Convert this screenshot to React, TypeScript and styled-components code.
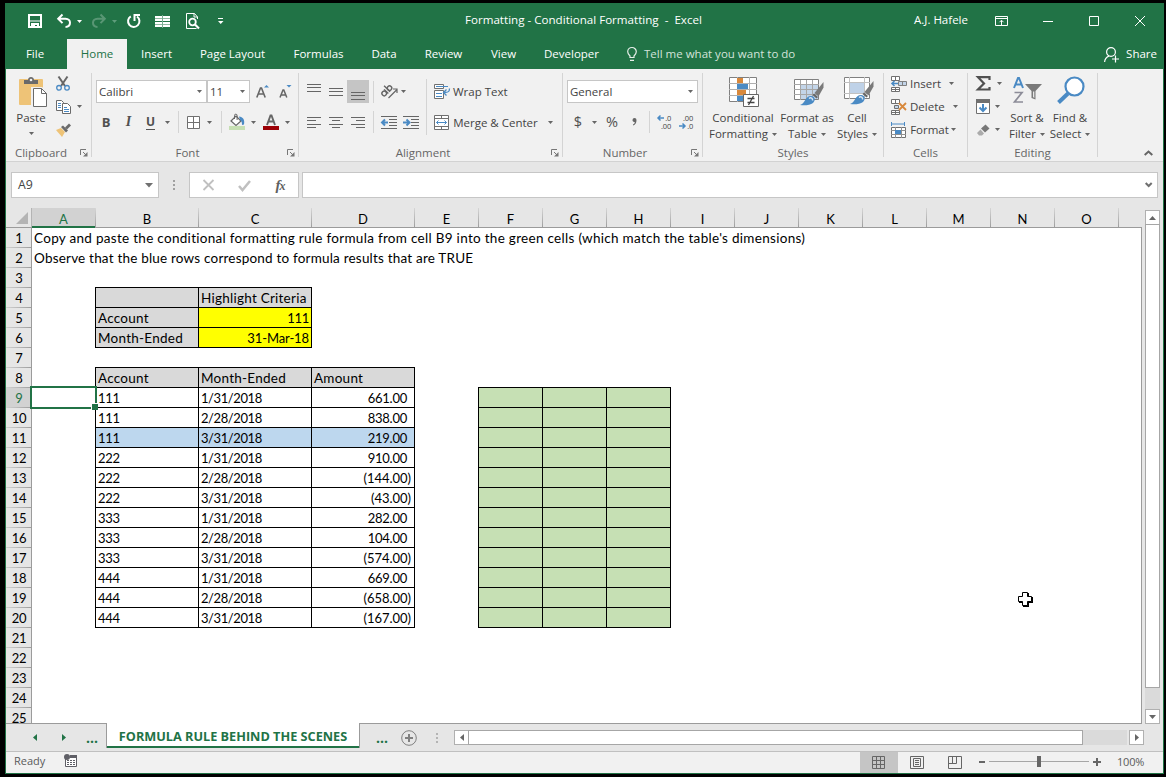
import React from "react";
import styled, { createGlobalStyle, css } from "styled-components";

const green = "#217346";
const ink = "#444444";
const iconGray = "#6a6a6a";
const blue = "#4a8ac4";

const GlobalStyle = createGlobalStyle`
  * {
    box-sizing: border-box;
  }
  body {
    margin: 0;
    background: #000000;
    font-family: "Open Sans", "Noto Sans", sans-serif;
    font-size: 11.5px;
    color: ${ink};
  }
`;

const Screen = styled.div`
  width: 1166px;
  height: 777px;
  padding: 3px 2px 3px 5px;
  background: #000000;
  overflow: hidden;
`;

const Window = styled.div`
  height: 771px;
  display: flex;
  flex-direction: column;
  border: 1px solid ${green};
  border-top: 0;
  background: #e6e6e6;
  white-space: nowrap;
`;

const Icon = styled.svg`
  display: block;
  flex: none;
  overflow: visible;
`;

/* Fixed width cell of a toolbar row */
const Slot = styled.div<{ $w: number; $active?: boolean }>`
  width: ${p => p.$w}px;
  height: 100%;
  flex: none;
  display: flex;
  align-items: center;
  justify-content: center;
  gap: 6px;
  background: ${p => (p.$active ? "#c5c5c5" : "transparent")};
`;

const Caret = ({ color = "#666666" }: { color?: string }) => (
  <Icon width="5" height="3" viewBox="0 0 5 3">
    <path d="M0 0h5L2.5 3z" fill={color} />
  </Icon>
);

/* ---------- title bar ---------- */

const TitleBar = styled.header`
  height: 36px;
  flex: none;
  display: flex;
  align-items: center;
  background: ${green};
  color: #ffffff;
`;

const QuickAccess = styled.div`
  width: 459px;
  height: 34px;
  flex: none;
  padding-left: 17px;
  display: flex;
`;

const DocTitle = styled.div`
  width: 449px;
  flex: none;
  font-size: 11.6px;
  line-height: 32px;
  height: 34px;
  white-space: pre;
`;

const User = styled.div`
  width: 64px;
  flex: none;
  line-height: 32px;
  height: 34px;
`;

const WindowButtons = styled.div`
  display: flex;
  height: 32px;
`;

/* ---------- ribbon tabs ---------- */

const Tabs = styled.nav`
  height: 30px;
  flex: none;
  display: flex;
  background: ${green};
  color: #ffffff;
  line-height: 30px;
`;

const Tab = styled.div<{ $w: number; $active?: boolean }>`
  width: ${p => p.$w}px;
  text-align: center;

  &:first-child {
    padding-right: 3px;
  }
  ${p =>
    p.$active &&
    css`
      background: #f1f1f1;
      color: ${green};
    `}
`;

const TellMe = styled.div`
  flex: 1;
  padding-left: 14px;
  display: flex;
  align-items: center;
  gap: 7px;
  color: #d3e3da;
`;

const Share = styled.div`
  padding-right: 6px;
  display: flex;
  align-items: center;
  gap: 7px;
`;

/* ---------- ribbon ---------- */

const Ribbon = styled.section`
  height: 93px;
  flex: none;
  display: flex;
  background: #f1f1f1;
  border-bottom: 1px solid #d2d2d2;
`;

const Divider = styled.div`
  width: 1px;
  height: 84px;
  margin-top: 4px;
  flex: none;
  background: #d4d4d4;
`;

const Group = styled.div<{ $w: number }>`
  width: ${p => p.$w}px;
  flex: none;
  display: flex;
  flex-direction: column;
`;

const GroupBody = styled.div`
  height: 75px;
  display: flex;
`;

const GroupLabel = styled.div`
  height: 16px;
  display: flex;
  align-items: center;
  color: #666666;
`;

const LabelText = styled.span`
  flex: 1;
  text-align: center;
`;

const Launcher = styled.div`
  width: 15px;
  padding: 2px 0 0 4px;
`;

const Column = styled.div<{ $w?: number; $top?: number; $gap?: number }>`
  width: ${p => (p.$w ? p.$w + "px" : "auto")};
  padding-top: ${p => p.$top || 0}px;
  display: flex;
  flex-direction: column;
  align-items: flex-start;
  gap: ${p => p.$gap || 0}px;
`;

const Row = styled.div<{ $h?: number; $left?: number }>`
  height: ${p => p.$h || 23}px;
  padding-left: ${p => p.$left || 0}px;
  display: flex;
  align-items: center;
`;

const Combo = styled.div<{ $w: number }>`
  width: ${p => p.$w}px;
  height: 23px;
  padding: 0 4px 0 2px;
  display: flex;
  align-items: center;
  justify-content: space-between;
  background: #ffffff;
  border: 1px solid #c6c6c6;
`;

const Line = styled.div<{ $h?: number }>`
  width: 1px;
  height: ${p => p.$h || 22}px;
  flex: none;
  background: #d4d4d4;
`;

const Letter = styled.span<{
  $bold?: boolean;
  $italic?: boolean;
  $under?: boolean;
  $size?: number;
}>`
  font-size: ${p => p.$size || 13}px;
  font-weight: ${p => (p.$bold ? 700 : 500)};
  font-style: ${p => (p.$italic ? "italic" : "normal")};
  font-family: ${p => (p.$italic ? '"Liberation Serif", serif' : "inherit")};
  line-height: 14px;
  border-bottom: ${p => (p.$under ? "1px solid #555555" : "0")};
  color: #505050;
`;

const CommandText = styled.span<{ $w?: number }>`
  width: ${p => (p.$w ? p.$w + "px" : "auto")};
  padding-left: 3px;
`;

const BigButton = styled.div<{ $w: number }>`
  width: ${p => p.$w}px;
  padding-top: 8px;
  flex: none;
  display: flex;
  flex-direction: column;
  align-items: center;
  line-height: 16px;
`;

const BigIcon = styled.div<{ $shift?: number }>`
  height: 33px;
  padding-left: ${p => p.$shift || 0}px;
`;

const BigLine = styled.div<{ $low?: boolean }>`
  padding-top: ${p => (p.$low ? 6 : 0)}px;
  display: flex;
  align-items: center;
  gap: 4px;
`;

const Collapse = styled.div`
  flex: 1;
  padding: 0 10px 5px 0;
  display: flex;
  align-items: flex-end;
  justify-content: flex-end;
`;

/* ---------- formula bar ---------- */

const FormulaBar = styled.section`
  height: 46px;
  flex: none;
  padding: 10px 5px 10px 5px;
  display: flex;
`;

const Field = styled.div<{ $w?: number }>`
  ${p => (p.$w ? `width: ${p.$w}px;` : "flex: 1;")}
  height: 26px;
  padding: 0 ${p => (p.$w ? 5 : 4)}px 0 6px;
  display: flex;
  align-items: center;
  justify-content: space-between;
  font-size: 12.3px;
  line-height: 20px;
  background: #ffffff;
  border: 1px solid #c6c6c6;
`;

const FieldIcons = styled.div`
  width: 110px;
  height: 26px;
  margin-right: 3px;
  display: flex;
  background: #ffffff;
  border: 1px solid #c6c6c6;
`;

const Fx = styled.span`
  font: italic bold 15px "Liberation Serif", serif;
  color: #606060;
  letter-spacing: -1px;

  small {
    font-size: 12px;
  }
`;

/* ---------- sheet ---------- */

const SheetArea = styled.main`
  height: 516px;
  flex: none;
  display: flex;
`;

const Sheet = styled.div`
  width: 1136px;
  height: 516px;
  flex: none;
  display: flex;
  flex-direction: column;
  font-family: Lato, sans-serif;
  font-size: 13px;
  color: #000000;
`;

const HeaderRow = styled.div`
  height: 20px;
  flex: none;
  display: flex;
  border-bottom: 1px solid #9b9b9b;
`;

const Corner = styled.div`
  width: 26px;
  padding: 4px 3px 0 10px;
  border-right: 1px solid #b4b4b4;
`;

const ColumnHead = styled.div<{ $w: number; $active?: boolean }>`
  width: ${p => p.$w}px;
  height: ${p => (p.$active ? 20 : 19)}px;
  flex: none;
  line-height: 22px;
  text-align: center;
  border-right: 1px solid;
  border-image: linear-gradient(#d9d9d9, #9b9b9b) 1;
  ${p =>
    p.$active &&
    css`
      background: linear-gradient(#d2d2d2 18px, ${green} 18px);
      color: ${green};
    `}
`;

const SheetBody = styled.div`
  position: relative;
  height: 496px;
  display: flex;
  overflow: hidden;
  background: #ffffff;
  border-right: 1px solid #9b9b9b;
  border-bottom: 1px solid #9b9b9b;
`;

const RowHeads = styled.div`
  width: 26px;
  flex: none;
  background: #e6e6e6;
  border-right: 1px solid #9b9b9b;
`;

const RowHead = styled.div<{ $active?: boolean }>`
  height: 20px;
  padding-left: 1px;
  line-height: 20px;
  text-align: center;
  letter-spacing: -0.2px;
  border-bottom: 1px solid;
  border-image: linear-gradient(90deg, #d4d4d4, #9b9b9b) 1;
  background: ${p => (p.$active ? "#d2d2d2" : "transparent")};
  color: ${p => (p.$active ? green : "#000000")};
`;

const Grid = styled.div`
  flex: none;
  display: grid;
  grid-template-columns: 64px 103px 113px 103px repeat(11, 64px);
  grid-template-rows: repeat(25, 20px);
`;

const Cell = styled.div<{
  $col: number;
  $row: number;
  $fill?: string;
  $boxed?: boolean;
  $right?: number;
  $numeric?: boolean;
  $track?: number;
}>`
  grid-column: ${p => p.$col};
  grid-row: ${p => p.$row};
  height: ${p => (p.$boxed ? 21 : 19)}px;
  margin: ${p => (p.$boxed ? "-1px 0 0 -1px" : "0")};
  padding: 0 ${p => p.$right || 2}px 0 2px;
  border: ${p => (p.$boxed ? "1px solid #000000" : "0")};
  background: ${p => p.$fill || "transparent"};
  font-size: ${p => (p.$numeric ? 13 : 13.5)}px;
  letter-spacing: ${p => p.$track ?? (p.$numeric ? -0.28 : 0.25)}px;
  line-height: 20px;
  text-align: ${p => (p.$right ? "right" : "left")};
`;

const Selection = styled.div`
  position: absolute;
  left: 24px;
  top: 158px;
  width: 67px;
  height: 23px;
  border: 2px solid ${green};

  &::after {
    content: "";
    position: absolute;
    right: -3px;
    bottom: -3px;
    width: 6px;
    height: 6px;
    background: ${green};
    border: solid #ffffff;
    border-width: 1px 0 0 1px;
  }
`;

const Pointer = styled.div`
  position: absolute;
  left: 1012px;
  top: 364px;
`;

const VScroll = styled.div`
  width: 15px;
  height: 514px;
  margin: 2px 0 0 3px;
  display: flex;
  flex-direction: column;
  background: #dadada;
`;

const ScrollButton = styled.div`
  width: 15px;
  height: 15px;
  flex: none;
  display: flex;
  align-items: center;
  justify-content: center;
  background: #ffffff;
  border: 1px solid #b0b0b0;
`;

const VThumb = styled.div`
  height: 464px;
  margin-top: -1px;
  margin-bottom: auto;
  background: #ffffff;
  border: 1px solid #a6a6a6;
`;

/* ---------- sheet tabs ---------- */

const BottomBar = styled.div`
  height: 28px;
  flex: none;
  display: flex;
  border-bottom: 1px solid #c0c0c0;
`;

const Dots = styled.span`
  color: ${green};
  font-size: 14px;
  font-weight: 700;
  line-height: 20px;
`;

const SheetTab = styled.div`
  position: relative;
  width: 254px;
  height: 25px;
  margin-top: -1px;
  flex: none;
  text-align: center;
  font-size: 12.7px;
  font-weight: 700;
  line-height: 26px;
  color: ${green};
  background: #ffffff;
  border: solid #9b9b9b;
  border-width: 0 1px;
  box-shadow: inset 0 -2px ${green};
`;

const HScroll = styled.div`
  width: 690px;
  height: 15px;
  margin: 6px 0 0 -6px;
  display: flex;
`;

const HTrack = styled.div`
  width: 658px;
  margin: 0 2px 0 0;
  background: #dadada;
`;

const HThumb = styled.div`
  width: 615px;
  height: 15px;
  margin-left: -1px;
  background: #ffffff;
  border: 1px solid #a6a6a6;
`;

/* ---------- status bar ---------- */

const StatusBar = styled.footer`
  height: 21px;
  flex: none;
  padding-left: 8px;
  display: flex;
  align-items: center;
  background: #f1f1f1;
  color: #5a5a5a;
  font-size: 11px;
`;

const StatusLeft = styled.div`
  width: 846px;
  height: 19px;
  padding-bottom: 2px;
  flex: none;
  margin-bottom: 2px;
  display: flex;
  align-items: center;
  gap: 19px;
`;

const ZoomControls = styled.div`
  height: 19px;
  margin-bottom: 2px;
  display: flex;
  align-items: center;
`;

const ZoomTrack = styled.div`
  width: 100px;
  height: 1px;
  margin: 0 4px 0 -1px;
  display: flex;
  align-items: center;
  justify-content: center;
  background: #a6a6a6;
`;

const ZoomThumb = styled.div`
  width: 4px;
  height: 11px;
  flex: none;
  background: #666666;
`;

const ZoomText = styled.span`
  padding: 0 0 1px 16px;
  letter-spacing: -0.2px;
`;

/* ---------- icons ---------- */

const SaveIcon = () => (
  <Icon width="14" height="14" viewBox="0 0 14 14">
    <path d="M1 1h12v12H1z" fill="none" stroke="#fff" strokeWidth="2" />
    <path d="M2 6.5h10v1H2zM3 9h8v5H9v-3H7v3H3z" fill="#fff" />
    <path d="M11 0h3v2z" fill="#fff" />
  </Icon>
);

const UndoIcon = ({ flip }: { flip?: boolean }) => (
  <Icon width="14" height="14" viewBox="0 0 14 14" opacity={flip ? 0.25 : 1}>
    <g
      transform={flip ? "translate(14 0) scale(-1 1)" : undefined}
      fill="none"
      stroke="#fff"
      strokeWidth="2"
    >
      <path d="M5.500 .5 1.200 4.800l4.300 4.300M1.500 4.800h7c6 0 6 8 0 8.200" />
    </g>
  </Icon>
);

const RepeatIcon = () => (
  <Icon width="14" height="14" viewBox="0 0 14 14">
    <path d="M3.800 2.300A5.700 5.700 0 1 0 10 2.500" fill="none" stroke="#fff" strokeWidth="2" />
    <path d="M7.500 7V1H13" fill="none" stroke="#fff" strokeWidth="2" />
  </Icon>
);

const PanesIcon = () => (
  <Icon width="15" height="13" viewBox="0 0 15 13" shapeRendering="crispEdges">
    <path d="M0 1h7v5H0zM8 1h7v5H8zM0 7h7v5H0zM8 7h7v5H8z" fill="#fff" />
    <path d="M0 3.500h7M8 3.500h7M0 9.500h7M8 9.500h7" stroke={green} strokeOpacity="0.5" />
    <path d="M7.500 0v13" stroke="#fff" strokeOpacity="0.4" />
  </Icon>
);

const PreviewIcon = () => (
  <Icon width="14" height="16" viewBox="0 0 14 16">
    <path d="M11.500 6V4l-3-3.500h-8v15h10" fill="none" stroke="#fff" />
    <path d="M8 .5V4h3.500" fill="none" stroke="#fff" />
    <circle cx="6.500" cy="9" r="3.300" fill="none" stroke="#fff" strokeWidth="1.800" />
    <path d="m9 11.500 4 4" stroke="#fff" strokeWidth="2.200" />
  </Icon>
);

const CustomizeIcon = () => (
  <Icon width="6" height="7" viewBox="0 0 6 7">
    <path d="M0 0h5v1H0zM0 3h5.500L2.750 6z" fill="#fff" />
  </Icon>
);

const RibbonOptionsIcon = () => (
  <Icon width="13" height="10" viewBox="0 0 13 10">
    <path d="M.5.5h12v9H.5zM.5 2.500h12M6.500 9V4.500M4.500 6.200l2-2 2 2" fill="none" stroke="#fff" />
  </Icon>
);

const BulbIcon = () => (
  <Icon width="10" height="14" viewBox="0 0 10 14">
    <path
      d="M3 10.500V9C1.500 7.500.7 6.500.7 4.800a4.300 4.300 0 0 1 8.600 0C9.300 6.500 8.500 7.500 7 9v1.500zM3 13.300h4"
      fill="none"
      stroke="#e6efe9"
      strokeWidth="1.200"
    />
  </Icon>
);

const PersonIcon = () => (
  <Icon width="15" height="15" viewBox="0 0 15 15">
    <circle cx="7" cy="5" r="4.400" fill="none" stroke="#fff" strokeWidth="1.200" />
    <path d="M.6 15c.2-3 2-5 4.500-6M8 12h7M11.500 8.500v7" fill="none" stroke="#fff" strokeWidth="1.200" />
  </Icon>
);

const LauncherIcon = () => (
  <Icon width="8" height="8" viewBox="0 0 8 8">
    <path d="M.5 6V.5H6M3 3l3 3" fill="none" stroke="#777" />
    <path d="M7.500 3v4.500H3z" fill="#777" />
  </Icon>
);

const PasteIcon = () => (
  <Icon width="29" height="31" viewBox="0 0 29 31">
    <rect x="0" y="2" width="24" height="26" rx="1" fill="#eec377" />
    <path d="M5 7V3h4c0-4 6-4 6 0h4v4z" fill="#6a6a6a" />
    <circle cx="12" cy="3" r="1.300" fill="#f1f1f1" />
    <path d="M13.500 11.500h9l5 5v14h-14z" fill="#fff" stroke="#f1f1f1" strokeWidth="3" />
    <path d="M14.500 11.500h8l5 5v13h-13z" fill="#fff" stroke={iconGray} />
    <path d="M22.500 11.500v5h5" fill="none" stroke={iconGray} />
  </Icon>
);

const CutIcon = () => (
  <Icon width="14" height="15" viewBox="0 0 14 15">
    <path d="M2.500.5 9 10M11.500.5 5 10" stroke="#666" strokeWidth="2" />
    <circle cx="3" cy="11.800" r="2.300" fill="none" stroke={blue} strokeWidth="1.300" />
    <circle cx="11" cy="11.800" r="2.300" fill="none" stroke={blue} strokeWidth="1.300" />
  </Icon>
);

const CopyIcon = () => (
  <Icon width="15" height="14" viewBox="0 0 15 14">
    <path d="M.5.5h5l2 2v8h-7z" fill="#fff" stroke={iconGray} />
    <path d="M6.500 3.500h5l3 3v7h-8z" fill="#fff" stroke={iconGray} />
    <path d="M2 3.500h3M2 5.500h3M2 7.500h3M8 7.500h3M8 9.500h5M8 11.500h5" stroke={blue} />
  </Icon>
);

const PainterIcon = () => (
  <Icon width="15" height="14" viewBox="0 0 15 14">
    <path d="m0 7 5-2 4 4-3 5z" fill="#eec377" />
    <path d="m5 4 2-1.500 5 5L10 9.500z" fill="#6a6a6a" />
    <path d="m9 4.500 4-4 2 2-4 4z" fill="#6a6a6a" />
  </Icon>
);

const GrowIcon = ({ small }: { small?: boolean }) => (
  <Icon width="13" height="14" viewBox="0 0 13 14">
    {small ? (
      <>
        <path d="M1 12.500 4 5h.8l3 7.500M2.200 10h4.400" fill="none" stroke="#666" strokeWidth="1.500" />
        <path d="M7.500 0h5L10 2.500z" fill={blue} />
      </>
    ) : (
      <>
        <path d="M.8 12.500 4.500 3h1l3.700 9.500M2.200 9h5.600" fill="none" stroke="#666" strokeWidth="1.600" />
        <path d="M8 2.500h5L10.500 0z" fill={blue} />
      </>
    )}
  </Icon>
);

const BordersIcon = () => (
  <Icon width="13" height="13" viewBox="0 0 13 13">
    <path d="M.5.5h12v12H.5zM6.500 0v13M0 6.500h13" fill="#fff" stroke="#707070" />
  </Icon>
);

const FillIcon = () => (
  <Icon width="17" height="16" viewBox="0 0 17 16">
    <path d="m2 7 5-5 5 5-5 4.500z" fill="#fff" stroke="#666" strokeWidth="1.200" />
    <path d="M5.500 5V1.500a1.300 1.300 0 0 1 2.600 0V6" fill="none" stroke="#666" />
    <path d="M10 2.500c4 .5 6 3 5 8l-2 .5c0-3-.5-4-2-5z" fill={blue} />
    <path d="M0 12h16v4H0z" fill="#c6dfb3" />
  </Icon>
);

const FontColorIcon = () => (
  <Icon width="16" height="16" viewBox="0 0 16 16">
    <path d="M4 11 7.500 1.500h1L12 11M5.300 7.500h5.400" fill="none" stroke="#666" strokeWidth="1.900" />
    <path d="M0 12h16v4H0z" fill="#9c0006" />
  </Icon>
);

/* Text line pictogram: each entry is x1, x2, y */
const LinesIcon = ({ lines, h = 12 }: { lines: number[][]; h?: number }) => (
  <Icon width="14" height={h} viewBox={`0 0 14 ${h}`} shapeRendering="crispEdges">
    {lines.map(([x1, x2, y]) => (
      <path key={y} d={`M${x1} ${y + 0.5}H${x2}`} stroke="#666" />
    ))}
  </Icon>
);

const OrientationIcon = () => (
  <Icon width="17" height="15" viewBox="0 0 17 15">
    <g transform="rotate(-45 5 7)" fill="none" stroke="#666" strokeWidth="1.400">
      <circle cx="2" cy="7.500" r="2.300" />
      <path d="M4.800 4.500V10.500M7.300 2v8.500" />
      <circle cx="9.500" cy="7.500" r="2.200" />
    </g>
    <path d="m7.500 14 8-8M12 5h4v4" fill="none" stroke="#666" strokeWidth="1.200" />
  </Icon>
);

const IndentIcon = ({ right }: { right?: boolean }) => (
  <Icon width="16" height="13" viewBox="0 0 16 13">
    <path d="M0 .5h16M8 3.500h8M8 6.500h8M8 9.500h8M0 12.500h16" stroke="#666" />
    <path
      d={right ? "M0 6.500h6M3.500 3.500l3 3-3 3" : "M7 6.500H1M4 3.500l-3 3 3 3"}
      fill="none"
      stroke={blue}
      strokeWidth="2"
    />
  </Icon>
);

const WrapIcon = () => (
  <Icon width="16" height="16" viewBox="0 0 16 16">
    <path d="M.5.5h9v4h-9zM.5 6.500h9v8h-9z" fill="#fff" stroke="#707070" />
    <path d="M2 2.500h12M2 9.500h6M2 12.500h6" stroke={blue} />
    <path d="M15.500 4.500c0 3-1 4-5 4M12.500 5.500l-3 3 3 3" fill="none" stroke={blue} strokeWidth="1.300" />
  </Icon>
);

const MergeIcon = () => (
  <Icon width="15" height="15" viewBox="0 0 15 15">
    <path d="M.5.5h14v14H.5zM.5 3.500h14M.5 11.500h14M7.500 0v3.500M7.500 11.500V15" fill="#fff" stroke="#707070" />
    <path d="M2.500 7.500h10M4.500 5.500l-2 2 2 2M10.500 5.500l2 2-2 2" fill="none" stroke={blue} />
  </Icon>
);

const DecimalBox = styled.div`
  width: 14px;
  font-size: 7.5px;
  letter-spacing: -0.2px;
  color: #444444;
`;

const DecimalRow = styled.div<{ $right?: boolean }>`
  height: 8px;
  line-height: 8px;
  display: flex;
  align-items: center;
  justify-content: ${p => (p.$right ? "flex-end" : "space-between")};
`;

const SmallArrow = ({ right }: { right?: boolean }) => (
  <Icon width="7" height="6" viewBox="0 0 7 6">
    <path
      d={right ? "M0 3h6M3.500.5 6 3 3.500 5.500" : "M7 3H1M3.500.5 1 3l2.500 2.500"}
      fill="none"
      stroke={blue}
      strokeWidth="1.500"
    />
  </Icon>
);

const ConditionalIcon = () => (
  <Icon width="30" height="30" viewBox="0 0 30 30">
    <path d="M.5.5h27v24H.5z" fill="#fff" stroke="#808080" />
    <path d="M8.500 0v25M20.500 0v25M0 6.500h28M0 12.500h28M0 18.500h28" stroke="#b0b0b0" />
    <path d="M8 1h6v5H8zM8 13h9v5H8z" fill="#d8883b" />
    <path d="M8 7h11v5H8zM8 19h6v5H8z" fill={blue} />
    <path d="M14.500 17.500h15v12h-15z" fill="#fff" stroke="#666" />
    <path d="M18.500 21.500h7M18.500 25.500h7M24.500 19l-5 9" stroke="#444" strokeWidth="1.300" />
  </Icon>
);

const Brush = () => (
  <>
    <path d="m29.500 5-9 11 4 3.500 5-9z" fill="#7a7a7a" />
    <path d="m20 16.500 4 3.500-1.500 1.500-4-3.500z" fill="#666" />
    <path d="M6 28c5-1 5-9 11-9 4 0 5 4 2 7-3 2.500-9 2.500-13 2z" fill={blue} />
    <path d="M15 21.500c2-1.500 4 0 3.500 2" fill="none" stroke="#d6e6f5" strokeWidth="1.500" />
  </>
);

const TableIcon = () => (
  <Icon width="30" height="30" viewBox="0 0 30 30">
    <path d="M.5 2.500h24v20H.5z" fill="#fff" stroke="#808080" />
    <path d="M7 8h17v14H7z" fill="#c3d5e9" />
    <path d="M6.500 3v20M12.500 3v20M18.500 3v20M0 7.500h25M0 12.500h25M0 17.500h25" stroke="#a6a6a6" />
    <Brush />
  </Icon>
);

const CellStylesIcon = () => (
  <Icon width="30" height="30" viewBox="0 0 30 30">
    <path d="M.5.5h25v21H.5z" fill="#fff" stroke="#808080" />
    <path d="M5.500 0v22M20.500 0v22M0 5.500h26M0 16.500h26" stroke="#c0c0c0" />
    <path d="M6 6h14v10H6z" fill="#bfd2e8" />
    <g transform="translate(0 -1)">
      <Brush />
    </g>
  </Icon>
);

const InsertIcon = () => (
  <Icon width="16" height="16" viewBox="0 0 16 16">
    <path d="M.5.5h8v4h-8zM4.500 0v4.500M.5 11.500h8v4h-8zM4.500 11v5M.5 13.500h8" fill="#fff" stroke="#707070" />
    <path d="M7.500 5.500h8v4h-8zM11.500 5v5" fill="#c3d5e9" stroke="#808080" />
    <path d="M7 7.500H1M3.500 5l-2.500 2.500L3.500 10" fill="none" stroke={blue} strokeWidth="1.600" />
  </Icon>
);

const DeleteIcon = () => (
  <Icon width="16" height="16" viewBox="0 0 16 16">
    <path d="M.5.5h8v4h-8zM4.500 0v4.500M.5 11.500h8v4h-8zM4.500 11v5M.5 13.500h8" fill="#fff" stroke="#707070" />
    <path d="M3.500 6.500h4v3h-4z" fill="#c3d5e9" stroke="#707070" />
    <path d="m8 4 7 7M15 4l-7 7" stroke="#d8883b" strokeWidth="1.800" />
  </Icon>
);

const FormatIcon = () => (
  <Icon width="15" height="16" viewBox="0 0 15 16">
    <path d="M1 2h12M.5 0v4M13.500 0v4" stroke={blue} />
    <path d="M.5 5.500h14v10H.5z" fill="#fff" stroke="#707070" />
    <path d="M4.500 5v11M10.500 5v11M0 8.500h15M0 12.500h15" stroke="#909090" />
    <path d="M4 8h6v4H4z" fill={blue} />
  </Icon>
);

const SigmaIcon = () => (
  <Icon width="15" height="15" viewBox="0 0 15 15">
    <path d="M13.500 4V1.200H2L8 7.500l-6 6h11.500V11" fill="none" stroke="#505050" strokeWidth="2.200" />
  </Icon>
);

const FillDownIcon = () => (
  <Icon width="14" height="15" viewBox="0 0 14 15">
    <path d="M.5.5h13v14H.5z" fill="#fff" stroke="#707070" />
    <path d="M0 0h14v4H0z" fill="#707070" />
    <path d="M7 5v7M3.500 8.500 7 12l3.500-3.500" fill="none" stroke={blue} strokeWidth="2" />
  </Icon>
);

const EraserIcon = () => (
  <Icon width="13" height="12" viewBox="0 0 13 12">
    <path d="M4 4.500 8.500.5l4 4-4.500 4z" fill="#777" />
    <path d="m3.500 5.500 3.500 4L5 11.500H2L0 9z" fill="#ababab" />
  </Icon>
);

const SortIcon = () => (
  <Icon width="30" height="28" viewBox="0 0 30 28">
    <path d="M1 11 5 1h1l4 10M2.500 7.500h6" fill="none" stroke={blue} strokeWidth="2" />
    <path d="M1.500 15.500H9L1.500 25H10" fill="none" stroke="#8c8c98" strokeWidth="1.700" />
    <path d="M12 7h17l-6.500 7v8.500L18.500 21v-7z" fill="#7a7a7a" />
    <path d="M20 14.500h1.300v6.500L20 20z" fill="#e8e8e8" />
  </Icon>
);

const FindIcon = () => (
  <Icon width="28" height="28" viewBox="0 0 28 28">
    <circle cx="17.500" cy="9.500" r="9" fill="#fff" stroke={blue} strokeWidth="2.200" />
    <path d="m11 16.500-9.500 9" stroke={blue} strokeWidth="4" />
  </Icon>
);

const ViewIcon = ({ d }: { d: string }) => (
  <Icon width="14" height="13" viewBox="0 0 14 13">
    <path d={d} fill="none" stroke="#666" />
  </Icon>
);

const MacroIcon = () => (
  <Icon width="13" height="13" viewBox="0 0 13 13">
    <path d="M1.500 4v8.500h11v-11H6" fill="#fff" stroke="#5f5f66" />
    <path d="M6 1h7v3H6z" fill="#5f5f66" />
    <circle cx="3" cy="3" r="3" fill="#5f5f66" />
    <path d="M3 6.500h8M3 8.500h8M3 10.500h8" stroke="#5f5f66" strokeDasharray="2 1" />
  </Icon>
);

/* ---------- data ---------- */

const tabs: [string, number][] = [
  ["Insert", 59],
  ["Page Layout", 93],
  ["Formulas", 79],
  ["Data", 52],
  ["Review", 67],
  ["View", 53],
  ["Developer", 83]
];

const columns: [string, number][] = [
  ["A", 64],
  ["B", 103],
  ["C", 113],
  ["D", 103],
  ..."EFGHIJKLMNO".split("").map((c): [string, number] => [c, 64])
];

const records = [
  ["111", "1/31/2018", "661.00"],
  ["111", "2/28/2018", "838.00"],
  ["111", "3/31/2018", "219.00"],
  ["222", "1/31/2018", "910.00"],
  ["222", "2/28/2018", "(144.00)"],
  ["222", "3/31/2018", "(43.00)"],
  ["333", "1/31/2018", "282.00"],
  ["333", "2/28/2018", "104.00"],
  ["333", "3/31/2018", "(574.00)"],
  ["444", "1/31/2018", "669.00"],
  ["444", "2/28/2018", "(658.00)"],
  ["444", "3/31/2018", "(167.00)"]
];

const criteria = { account: "111", month: "3/31/2018" };

const RibbonGroup = ({
  w,
  label,
  launcher,
  children
}: {
  w: number;
  label: string;
  launcher?: boolean;
  children: React.ReactNode;
}) => (
  <>
    <Group $w={w}>
      <GroupBody>{children}</GroupBody>
      <GroupLabel>
        <LabelText>{label}</LabelText>
        {launcher && (
          <Launcher>
            <LauncherIcon />
          </Launcher>
        )}
      </GroupLabel>
    </Group>
    <Divider />
  </>
);

const App = () => (
  <Screen>
    <GlobalStyle />
    <Window>
      <TitleBar>
        <QuickAccess>
          <Slot $w={24}><SaveIcon /></Slot>
          <Slot $w={45}><UndoIcon /><Caret color="#fff" /></Slot>
          <Slot $w={25}><UndoIcon flip /><Caret color="#5f9d7c" /></Slot>
          <Slot $w={33}><RepeatIcon /></Slot>
          <Slot $w={25}><PanesIcon /></Slot>
          <Slot $w={35}><PreviewIcon /></Slot>
          <Slot $w={21}><CustomizeIcon /></Slot>
        </QuickAccess>
        <DocTitle>Formatting - Conditional Formatting  -  Excel</DocTitle>
        <User>A.J. Hafele</User>
        <WindowButtons>
          <Slot $w={47}><RibbonOptionsIcon /></Slot>
          <Slot $w={46}>
            <Icon width="10" height="1"><path d="M0 .5h10" stroke="#fff" /></Icon>
          </Slot>
          <Slot $w={46}>
            <Icon width="10" height="10"><path d="M.5.5h9v9h-9z" fill="none" stroke="#fff" /></Icon>
          </Slot>
          <Slot $w={46}>
            <Icon width="10" height="10"><path d="m0 0 10 10M10 0 0 10" stroke="#fff" /></Icon>
          </Slot>
        </WindowButtons>
      </TitleBar>

      <Tabs>
        <Tab $w={61}>File</Tab>
        <Tab $w={60} $active>Home</Tab>
        {tabs.map(([name, w]) => (
          <Tab key={name} $w={w}>{name}</Tab>
        ))}
        <TellMe>
          <BulbIcon />
          <span>Tell me what you want to do</span>
        </TellMe>
        <Share>
          <PersonIcon />
          <span>Share</span>
        </Share>
      </Tabs>

      <Ribbon>
        <RibbonGroup w={85} label="Clipboard" launcher>
          <BigButton $w={50}>
            <BigIcon $shift={4}><PasteIcon /></BigIcon>
            <BigLine>Paste</BigLine>
            <BigLine $low><Caret /></BigLine>
          </BigButton>
          <Column $top={3}>
            <Row><Slot $w={14}><CutIcon /></Slot></Row>
            <Row>
              <Slot $w={14}><CopyIcon /></Slot>
              <Slot $w={19}><Caret /></Slot>
            </Row>
            <Row><Slot $w={15}><PainterIcon /></Slot></Row>
          </Column>
        </RibbonGroup>

        <RibbonGroup w={206} label="Font" launcher>
          <Column $top={11} $gap={8}>
            <Row $left={4}>
              <Combo $w={111}>Calibri<Caret /></Combo>
              <Combo $w={43}>11<Caret /></Combo>
              <Slot $w={25}><GrowIcon /></Slot>
              <Slot $w={20}><GrowIcon small /></Slot>
            </Row>
            <Row $left={3} $h={22}>
              <Slot $w={22}><Letter $bold>B</Letter></Slot>
              <Slot $w={23}><Letter $italic $bold $size={14}>I</Letter></Slot>
              <Slot $w={21}><Letter $under $bold $size={12}>U</Letter></Slot>
              <Slot $w={13}><Caret /></Slot>
              <Slot $w={9}><Line /></Slot>
              <Slot $w={20}><BordersIcon /></Slot>
              <Slot $w={13}><Caret /></Slot>
              <Slot $w={11}><Line /></Slot>
              <Slot $w={21}><FillIcon /></Slot>
              <Slot $w={11}><Caret /></Slot>
              <Slot $w={24}><FontColorIcon /></Slot>
              <Slot $w={9}><Caret /></Slot>
            </Row>
          </Column>
        </RibbonGroup>

        <RibbonGroup w={263} label="Alignment" launcher>
          <Column $w={127} $top={11} $gap={8}>
            <Row $left={4}>
              <Slot $w={22}><LinesIcon h={16} lines={[[0, 14, 0], [0, 14, 3], [0, 14, 7]]} /></Slot>
              <Slot $w={22}><LinesIcon h={8} lines={[[0, 14, 0], [0, 14, 3], [0, 14, 7]]} /></Slot>
              <Slot $w={22} $active><LinesIcon h={16} lines={[[0, 14, 8], [0, 14, 11], [0, 14, 15]]} /></Slot>
              <Slot $w={9}><Line /></Slot>
              <Slot $w={22}><OrientationIcon /></Slot>
              <Slot $w={7}><Caret /></Slot>
            </Row>
            <Row $left={4} $h={22}>
              <Slot $w={22}><LinesIcon h={11} lines={[[0, 14, 0], [0, 9, 3], [0, 14, 7], [0, 9, 10]]} /></Slot>
              <Slot $w={22}><LinesIcon h={11} lines={[[0, 14, 0], [3, 11, 3], [0, 14, 7], [3, 11, 10]]} /></Slot>
              <Slot $w={22}><LinesIcon h={11} lines={[[0, 14, 0], [5, 14, 3], [0, 14, 7], [5, 14, 10]]} /></Slot>
              <Slot $w={9}><Line /></Slot>
              <Slot $w={22}><IndentIcon /></Slot>
              <Slot $w={22}><IndentIcon right /></Slot>
            </Row>
          </Column>
          <Column $top={10}><Line $h={56} /></Column>
          <Column $top={11} $gap={8}>
            <Row $left={7}>
              <WrapIcon />
              <CommandText>Wrap Text</CommandText>
            </Row>
            <Row $left={7} $h={22}>
              <MergeIcon />
              <CommandText $w={99}>&#8202;Merge &amp; Center</CommandText>
              <Caret />
            </Row>
          </Column>
        </RibbonGroup>

        <RibbonGroup w={139} label="Number" launcher>
          <Column $top={11} $gap={8}>
            <Row $left={4}>
              <Combo $w={131}>General<Caret /></Combo>
            </Row>
            <Row $left={4} $h={22}>
              <Slot $w={22}><Letter $size={14.5}>$</Letter></Slot>
              <Slot $w={11}><Caret /></Slot>
              <Slot $w={24}><Letter $size={14.5}>%</Letter></Slot>
              <Slot $w={20}>
                <Icon width="5" height="8"><path d="M2.500 0a2 2 0 0 1 2 2c0 3-1 4.500-3.500 5.500V6.500C2.300 6 2.800 5 2.700 4 1 4.200.5 3 .5 2a2 2 0 0 1 2-2z" fill="#666" /></Icon>
              </Slot>
              <Slot $w={11}><Line /></Slot>
              <Slot $w={18}>
                <DecimalBox>
                  <DecimalRow><SmallArrow />.0</DecimalRow>
                  <DecimalRow $right>.00</DecimalRow>
                </DecimalBox>
              </Slot>
              <Slot $w={26}>
                <DecimalBox>
                  <DecimalRow $right>.00</DecimalRow>
                  <DecimalRow><SmallArrow right />.0</DecimalRow>
                </DecimalBox>
              </Slot>
            </Row>
          </Column>
        </RibbonGroup>

        <RibbonGroup w={180} label="Styles">
          <BigButton $w={80}>
            <BigIcon $shift={2}><ConditionalIcon /></BigIcon>
            <BigLine>Conditional</BigLine>
            <BigLine>Formatting<Caret /></BigLine>
          </BigButton>
          <BigButton $w={48}>
            <BigIcon $shift={4}><TableIcon /></BigIcon>
            <BigLine>Format as</BigLine>
            <BigLine>Table<Caret /></BigLine>
          </BigButton>
          <BigButton $w={52}>
            <BigIcon $shift={4}><CellStylesIcon /></BigIcon>
            <BigLine>Cell</BigLine>
            <BigLine>Styles<Caret /></BigLine>
          </BigButton>
        </RibbonGroup>

        <RibbonGroup w={83} label="Cells">
          <Column $top={3}>
            <Row $left={7}><InsertIcon /><CommandText $w={42}>Insert</CommandText><Caret /></Row>
            <Row $left={7}><DeleteIcon /><CommandText $w={46}>Delete</CommandText><Caret /></Row>
            <Row $left={7}><FormatIcon /><CommandText $w={45}>&#8202;Format</CommandText><Caret /></Row>
          </Column>
        </RibbonGroup>

        <RibbonGroup w={129} label="Editing">
          <Column $w={37} $top={3}>
            <Row $left={4}><Slot $w={22}><SigmaIcon /></Slot><Slot $w={10}><Caret /></Slot></Row>
            <Row $left={4}><Slot $w={22}><FillDownIcon /></Slot><Slot $w={7}><Caret /></Slot></Row>
            <Row $left={4}><Slot $w={22}><EraserIcon /></Slot><Slot $w={7}><Caret /></Slot></Row>
          </Column>
          <BigButton $w={44}>
            <BigIcon $shift={2}><SortIcon /></BigIcon>
            <BigLine>Sort &amp;</BigLine>
            <BigLine>Filter<Caret /></BigLine>
          </BigButton>
          <BigButton $w={42}>
            <BigIcon $shift={1}><FindIcon /></BigIcon>
            <BigLine>Find &amp;</BigLine>
            <BigLine>Select<Caret /></BigLine>
          </BigButton>
        </RibbonGroup>

        <Collapse>
          <Icon width="9" height="6"><path d="m.7 5 3.800-3.500L8.300 5" fill="none" stroke="#666" strokeWidth="2" /></Icon>
        </Collapse>
      </Ribbon>

      <FormulaBar>
        <Field $w={148}>
          A9
          <Icon width="8" height="5"><path d="M0 0h8L4 4.500z" fill="#707070" /></Icon>
        </Field>
        <Slot $w={30}>
          <Icon width="2" height="10"><path d="M1 0v10" stroke="#a0a0a0" strokeWidth="2" strokeDasharray="2 2" /></Icon>
        </Slot>
        <FieldIcons>
          <Slot $w={36}>
            <Icon width="11" height="10"><path d="m.5 0 10 10m0-10-10 10" stroke="#c0c0c0" strokeWidth="1.800" /></Icon>
          </Slot>
          <Slot $w={36}>
            <Icon width="13" height="11"><path d="m1 6 3.500 4L12 1" fill="none" stroke="#c0c0c0" strokeWidth="2.500" /></Icon>
          </Slot>
          <Slot $w={36}><Fx>f<small>x</small></Fx></Slot>
        </FieldIcons>
        <Field>
          <span />
          <Icon width="8" height="6"><path d="m.7 1 3 3 3-3" fill="none" stroke="#707070" strokeWidth="2" /></Icon>
        </Field>
      </FormulaBar>

      <SheetArea>
        <Sheet>
          <HeaderRow>
            <Corner>
              <Icon width="12" height="12"><path d="M12 0v12H0z" fill="#b4b4b4" /></Icon>
            </Corner>
            {columns.map(([name, w]) => (
              <ColumnHead key={name} $w={w} $active={name === "A"}>{name}</ColumnHead>
            ))}
          </HeaderRow>
          <SheetBody>
            <RowHeads>
              {Array.from({ length: 25 }, (_, i) => (
                <RowHead key={i} $active={i === 8}>{i + 1}</RowHead>
              ))}
            </RowHeads>
            <Grid>
              <Cell $col={1} $row={1} $track={0.295}>
                Copy and paste the conditional formatting rule formula from cell B9 into the green cells (which match the table's dimensions)
              </Cell>
              <Cell $col={1} $row={2} $track={0.2}>
                Observe that the blue rows correspond to formula results that are TRUE
              </Cell>

              <Cell $col={2} $row={4} $boxed $fill="#d9d9d9" />
              <Cell $col={3} $row={4} $boxed $fill="#d9d9d9">Highlight Criteria</Cell>
              <Cell $col={2} $row={5} $boxed $fill="#d9d9d9">Account</Cell>
              <Cell $col={3} $row={5} $boxed $fill="#ffff00" $right={2} $numeric>111</Cell>
              <Cell $col={2} $row={6} $boxed $fill="#d9d9d9">Month-Ended</Cell>
              <Cell $col={3} $row={6} $boxed $fill="#ffff00" $right={2} $numeric $track={-0.1}>31-Mar-18</Cell>

              {["Account", "Month-Ended", "Amount"].map((h, i) => (
                <Cell key={h} $col={2 + i} $row={8} $boxed $fill="#d9d9d9">{h}</Cell>
              ))}
              {records.map(([account, month, amount], i) => {
                const hit = account === criteria.account && month === criteria.month;
                const fill = hit ? "#bdd7ee" : undefined;
                return (
                  <React.Fragment key={i}>
                    <Cell $col={2} $row={9 + i} $boxed $numeric $fill={fill}>{account}</Cell>
                    <Cell $col={3} $row={9 + i} $boxed $numeric $track={-0.42} $fill={fill}>{month}</Cell>
                    <Cell
                      $col={4}
                      $row={9 + i}
                      $boxed
                      $numeric
                      $track={amount.startsWith("(") ? -0.02 : -0.25}
                      $fill={fill}
                      $right={amount.startsWith("(") ? 3 : 7}
                    >
                      {amount}
                    </Cell>
                    {[6, 7, 8].map(col => (
                      <Cell key={col} $col={col} $row={9 + i} $boxed $fill="#c6e0b4" />
                    ))}
                  </React.Fragment>
                );
              })}
            </Grid>
            <Selection />
            <Pointer>
              <Icon width="15" height="15" viewBox="0 0 15 15">
                <path d="M5 1h6v4h4v6h-4v4H5v-4H1V5h4z" fill="#000" />
                <path d="M4.500.5h5v4h4v5h-4v4h-5v-4h-4v-5h4z" fill="#fff" stroke="#000" />
              </Icon>
            </Pointer>
          </SheetBody>
        </Sheet>
        <VScroll>
          <ScrollButton>
            <Icon width="7" height="4"><path d="M0 4h7L3.500 0z" fill="#666" /></Icon>
          </ScrollButton>
          <VThumb />
          <ScrollButton>
            <Icon width="7" height="4"><path d="M0 0h7L3.500 4z" fill="#666" /></Icon>
          </ScrollButton>
        </VScroll>
      </SheetArea>

      <BottomBar>
        <Slot $w={58}>
          <Icon width="4" height="7"><path d="M4 0v7L0 3.500z" fill={green} /></Icon>
        </Slot>
        <Slot $w={0}>
          <Icon width="4" height="7"><path d="M0 0v7l4-3.500z" fill={green} /></Icon>
        </Slot>
        <Slot $w={14} />
        <Slot $w={28}><Dots>...</Dots></Slot>
        <SheetTab>FORMULA RULE BEHIND THE SCENES</SheetTab>
        <Slot $w={44}><Dots>...</Dots></Slot>
        <Slot $w={10}>
          <Icon width="16" height="16">
            <path d="M8 4v8M4 8h8" stroke="#808080" strokeWidth="2" />
            <circle cx="8" cy="8" r="7.300" fill="none" stroke="#808080" />
          </Icon>
        </Slot>
        <Slot $w={46}>
          <Icon width="2" height="10"><path d="M1 0v10" stroke="#b4b4b4" strokeWidth="2" strokeDasharray="2 2" /></Icon>
        </Slot>
        <HScroll>
          <ScrollButton>
            <Icon width="4" height="7"><path d="M4 0v7L0 3.500z" fill="#666" /></Icon>
          </ScrollButton>
          <HTrack><HThumb /></HTrack>
          <ScrollButton>
            <Icon width="4" height="7"><path d="M0 0v7l4-3.500z" fill="#666" /></Icon>
          </ScrollButton>
        </HScroll>
      </BottomBar>

      <StatusBar>
        <StatusLeft>
          Ready
          <MacroIcon />
        </StatusLeft>
        <Slot $w={38} $active><ViewIcon d="M.5.500h12v12H.5zM4.500 0v13M8.500 0v13M0 4.500h13M0 8.500h13" /></Slot>
        <Slot $w={38}><ViewIcon d="M.5.500h13v12H.5zM3.500 2.500h7v8h-7zM5 4.500h4M5 6.500h4M5 8.500h4" /></Slot>
        <Slot $w={38}><ViewIcon d="M.5.500h13v12H.5zM.5 7.500h8v-7M4.500 0v7.500" /></Slot>
        <ZoomControls>
          <Slot $w={16}>
            <Icon width="6" height="2"><path d="M0 1h6" stroke="#666" strokeWidth="2" /></Icon>
          </Slot>
          <ZoomTrack><ZoomThumb /></ZoomTrack>
          <Icon width="8" height="8"><path d="M0 4h8M4 0v8" stroke="#666" strokeWidth="2" /></Icon>
          <ZoomText>100%</ZoomText>
        </ZoomControls>
      </StatusBar>
    </Window>
  </Screen>
);

export default App;
